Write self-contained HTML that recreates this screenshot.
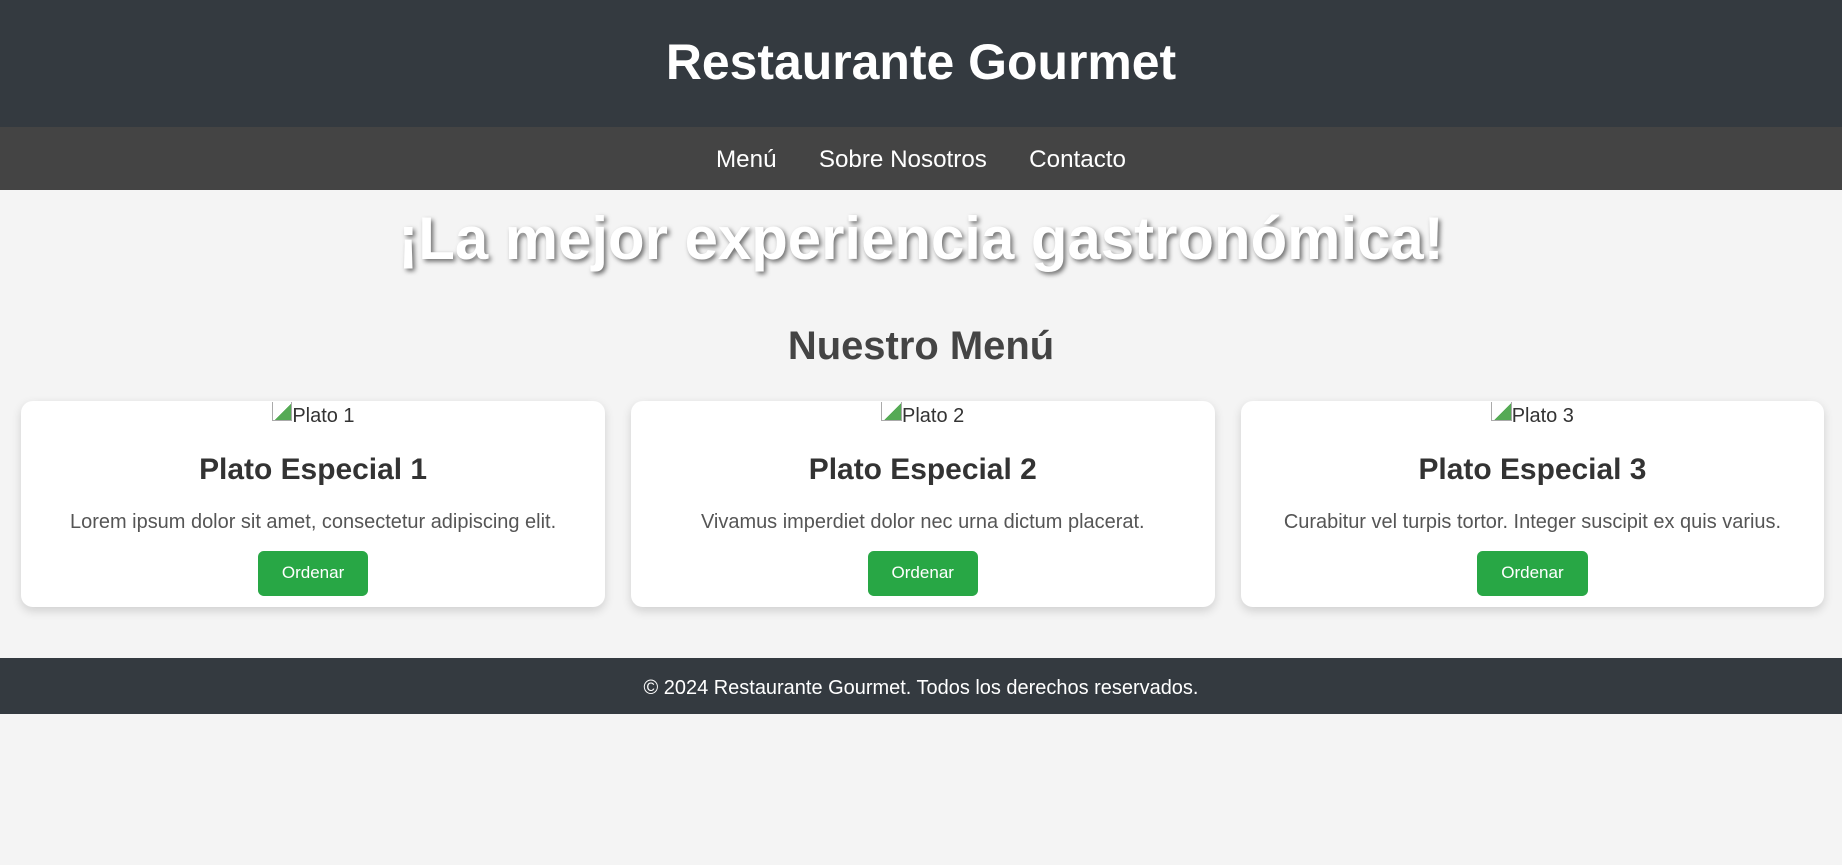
<!DOCTYPE html>
<html><head><meta charset="utf-8">
<style>
html{zoom:1.17474}
body{margin:0;background:#f4f4f4;font-family:"Liberation Sans",Arial,sans-serif;width:1568px;}
header{background:#343a40;color:#fff;height:108px;display:flex;align-items:center;justify-content:center}
header h1{margin:0;font-size:42.5px;font-weight:bold;position:relative;top:-1px}
nav{background:#444;height:54px;display:flex;align-items:center;justify-content:center}
nav a{color:#fff;text-decoration:none;font-size:20.6px;margin:0 18px;position:relative;top:1px}
.hero{text-align:center;color:#fff;font-size:51px;font-weight:bold;text-shadow:2px 2px 4px rgba(0,0,0,.55);height:80px;line-height:84px}
h2{text-align:center;color:#444;font-size:34px;margin:0;height:65px;line-height:106px;}
.cards{display:flex;gap:22px;padding:0 16px 0 18px;margin-top:34px}
.card{flex:0 0 497px;height:176px;background:#fff;border-radius:10px;box-shadow:0 3px 8px rgba(0,0,0,.15);text-align:center;color:#333}
.alt{font-size:17px;height:24px;line-height:26px;color:#333}
.alt span{display:inline-block;width:16px;height:16px;border:1px solid #aaa;border-top:none;vertical-align:top;margin-top:1px;background:linear-gradient(135deg,#fff 55%,#5a5 55%)}
.card h3{margin:0;font-size:25.5px;height:52px;line-height:70px}
.card p{margin:0;font-size:17px;color:#555;height:40px;line-height:56px}
.btn{display:inline-block;background:#28a745;color:#fff;font-size:14.5px;width:94px;height:38px;line-height:38px;border-radius:5px;margin-top:12px}
footer{background:#343a40;color:#fff;height:48px;line-height:52px;text-align:center;font-size:17px;margin-top:43px}
</style></head><body>
<header><h1>Restaurante Gourmet</h1></header>
<nav><a>Menú</a><a>Sobre Nosotros</a><a>Contacto</a></nav>
<div class="hero">¡La mejor experiencia gastronómica!</div>
<h2>Nuestro Menú</h2>
<div class="cards">
<div class="card"><div class="alt"><span></span>Plato 1</div><h3>Plato Especial 1</h3><p>Lorem ipsum dolor sit amet, consectetur adipiscing elit.</p><div class="btn">Ordenar</div></div>
<div class="card"><div class="alt"><span></span>Plato 2</div><h3>Plato Especial 2</h3><p>Vivamus imperdiet dolor nec urna dictum placerat.</p><div class="btn">Ordenar</div></div>
<div class="card"><div class="alt"><span></span>Plato 3</div><h3>Plato Especial 3</h3><p>Curabitur vel turpis tortor. Integer suscipit ex quis varius.</p><div class="btn">Ordenar</div></div>
</div>
<footer>© 2024 Restaurante Gourmet. Todos los derechos reservados.</footer>
</body></html>
